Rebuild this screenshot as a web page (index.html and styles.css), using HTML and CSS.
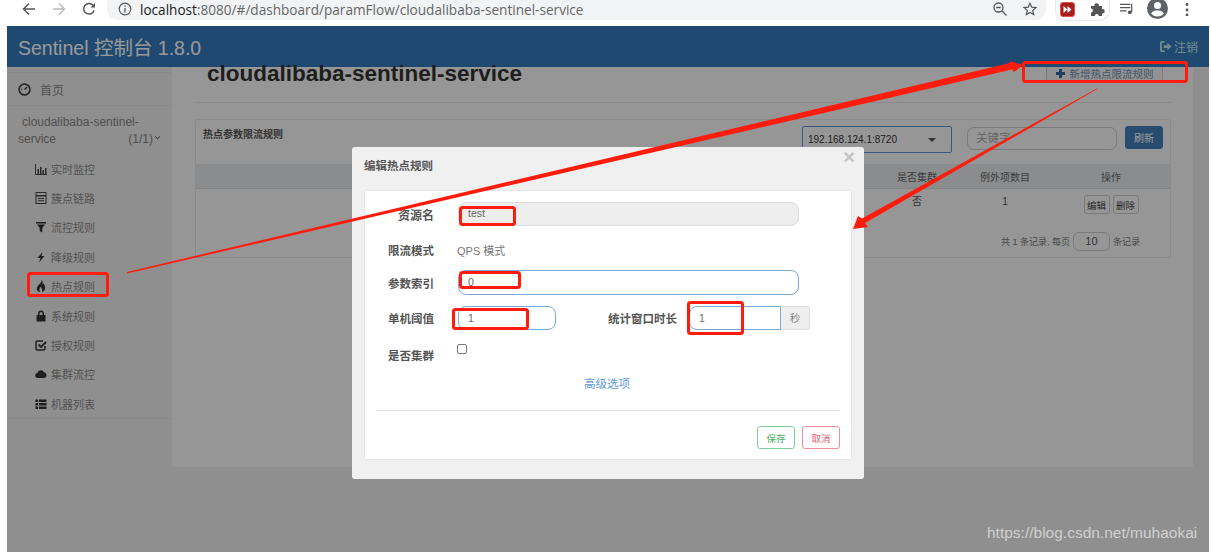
FILE: index.html
```html
<!DOCTYPE html>
<html lang="en">
<head>
    <meta charset="UTF-8">
    <title>Sentinel 控制台</title>
    <link rel="stylesheet" href="styles.css">
</head>
<body>
    <div class="browser-bar">
        <svg class="ico nav-back" viewBox="0 0 14 14"><path d="M13 7H2M7 1.500 1.500 7 7 12.500" fill="none" stroke="#555" stroke-width="1.500"/></svg>
        <svg class="ico nav-fwd" viewBox="0 0 14 14"><path d="M1 7h11M7 1.500 12.500 7 7 12.500" fill="none" stroke="#bbb" stroke-width="1.500"/></svg>
        <svg class="ico nav-reload" viewBox="0 0 14 14"><path d="M12 8.500A5.300 5.300 0 1 1 11 3.300" fill="none" stroke="#555" stroke-width="1.500"/><path d="M13 1v4.500H8.500z" fill="#555"/></svg>
        <div class="url-pill">
            <svg class="ico" viewBox="0 0 14 14"><circle cx="7" cy="7" r="5.800" fill="none" stroke="#555" stroke-width="1.200"/><path d="M7 6v4.500M7 3.500v1.300" stroke="#555" stroke-width="1.300"/></svg>
            <span class="url"><b>localhost</b>:8080/#/dashboard/paramFlow/cloudalibaba-sentinel-service</span>
            <svg class="ico url-zoom" viewBox="0 0 14 14"><circle cx="5.500" cy="5.500" r="4.500" fill="none" stroke="#555" stroke-width="1.300"/><path d="M3.300 5.500h4.400M9 9l4.500 4.500" stroke="#555" stroke-width="1.300"/></svg>
            <svg class="ico url-star" viewBox="0 0 14 14"><path d="M7 1.300 8.700 5.200l4.200.4-3.200 2.800 1 4.200L7 10.400l-3.700 2.200 1-4.200L1.100 5.600l4.200-.4z" fill="none" stroke="#555" stroke-width="1.200"/></svg>
        </div>
        <div class="ext-pill">
            <svg class="ext-red" viewBox="0 0 15 15"><rect x=".5" y=".5" width="14" height="14" rx="2.500" fill="#a81c1c" stroke="#d9534f"/><path d="M3.500 4 7.500 7.500 3.500 11zM7.500 4 11.500 7.500 7.500 11z" fill="#fff"/></svg>
            <svg class="ext-puzzle" viewBox="0 0 14 14"><path d="M0 4h3.500a2.200 2.200 0 1 1 4.300 0H11v3.200a2.200 2.200 0 1 1 0 4.300V14H7.800a2 2 0 1 0-4 0H0v-3.500a2 2 0 1 0 0-4z" fill="#555"/></svg>
        </div>
        <svg class="ico bar-list" viewBox="0 0 15 14"><path d="M0 2h11M0 5.500h11M0 9h7" stroke="#555" stroke-width="1.300"/><path d="M12.500 1.500v9" stroke="#555" stroke-width="1.300"/><circle cx="10.500" cy="10.500" r="2" fill="#555"/></svg>
        <svg class="bar-avatar" viewBox="0 0 21 21"><circle cx="10.500" cy="10.500" r="10.500" fill="#5f6368"/><circle cx="10.500" cy="7.500" r="3.500" fill="#fff"/><path d="M4 15.500c1.500-2.500 4-3 6.500-3s5 .5 6.500 3a8.500 8.500 0 0 1-13 0z" fill="#fff"/></svg>
        <svg class="bar-dots" viewBox="0 0 4 14"><circle cx="2" cy="2.500" r="1.400" fill="#555"/><circle cx="2" cy="8" r="1.400" fill="#555"/><circle cx="2" cy="13" r="1.400" fill="#555"/></svg>
    </div>

    <div class="page">
        <header class="top-nav">
            <span class="brand">Sentinel 控制台 1.8.0</span>
            <span class="logout">
                <svg viewBox="0 0 13 12"><path d="M5 1H2a1 1 0 0 0-1 1v8a1 1 0 0 0 1 1h3" fill="none" stroke="currentColor" stroke-width="2"/><path d="M4 4.500h4V2l4.500 4L8 10V7.500H4z" fill="currentColor"/></svg>
                注销
            </span>
        </header>

        <div class="layout">
            <aside class="sidebar">
                <div class="side-home">
                    <svg viewBox="0 0 12 12"><circle cx="6" cy="6" r="5" fill="none" stroke="#444" stroke-width="1.600"/><path d="M6 6 8.500 3.800M3 6h1" stroke="#444" stroke-width="1.400"/></svg>
                    首页
                </div>
                <div class="side-app">
                    <div class="app-line1">cloudalibaba-sentinel-</div>
                    <div class="app-line2"><span>service</span><span class="app-count">(1/1)<i class="chev"></i></span></div>
                </div>
                <ul class="side-menu">
                    <li><svg viewBox="0 0 12 12"><path d="M.5 1v10.500H12" fill="none" stroke="#444"/><path d="M2.500 6h1.500v5H2.500zM5 4h1.500v7H5zM7.500 7H9v4H7.500zM10 5h1.500v6H10z" fill="#444"/></svg>实时监控</li>
                    <li><svg viewBox="0 0 12 12"><rect x="1" y=".5" width="10" height="11" fill="none" stroke="#444"/><path d="M1 3h10v1.500H1zM3 6h6v1H3zM3 8.300h6v1H3z" fill="#444"/></svg>簇点链路</li>
                    <li><svg viewBox="0 0 12 12"><path d="M1 1h10v1.500H1zM2 3.500h8L7.300 7v4.500l-2.600-1.500V7z" fill="#333"/></svg>流控规则</li>
                    <li><svg viewBox="0 0 12 12"><path d="M7.500 1 2.500 7h3L4 11.500 9.500 5h-3z" fill="#333"/></svg>降级规则</li>
                    <li><svg viewBox="0 0 12 12"><path d="M6.500 0C7 3 3 4.500 2 7.500c-.8 2.300 1 4.500 3.200 4.500C3.800 10 4.500 8 6 6.500c0 2 2 2.500 1 5.500 2.500-.5 3.500-3 3-5.500-.3-1.500-1.200-2.500-1.700-3.500-.2 1-.5 1.500-1 2C8 3.500 8 1.500 6.500 0z" fill="#333"/></svg>热点规则</li>
                    <li><svg viewBox="0 0 12 12"><path d="M3 5V3.500a3 3 0 0 1 6 0V5h1.500v6.500h-9V5zM4.500 5h3V3.500a1.500 1.500 0 0 0-3 0z" fill="#333"/></svg>系统规则</li>
                    <li><svg viewBox="0 0 12 12"><path d="M10 7v2.500A1.500 1.500 0 0 1 8.500 11h-6A1.500 1.500 0 0 1 1 9.500v-6A1.500 1.500 0 0 1 2.500 2H8" fill="none" stroke="#333" stroke-width="1.500"/><path d="M3.500 5.500 6 8l5-5" fill="none" stroke="#333" stroke-width="1.800"/></svg>授权规则</li>
                    <li><svg viewBox="0 0 12 12"><path d="M3 10a2.500 2.500 0 0 1-.5-5A3.500 3.500 0 0 1 9 4.200 3 3 0 0 1 9.500 10z" fill="#333"/></svg>集群流控</li>
                    <li><svg viewBox="0 0 12 12"><path d="M.5 1.500h2.500V4H.5zM4 1.500h7.500V4H4zM.5 5h2.500v2.500H.5zM4 5h7.500v2.500H4zM.5 8.500h2.500V11H.5zM4 8.500h7.500V11H4z" fill="#333"/></svg>机器列表</li>
                </ul>
            </aside>

            <main class="content">
                <div class="page-head">
                    <h1>cloudalibaba-sentinel-service</h1>
                    <button class="btn-add"><i class="plus"></i>新增热点限流规则</button>
                </div>
                <section class="panel">
                    <div class="panel-top">
                        <span class="panel-title">热点参数限流规则</span>
                        <div class="machine-select">192.168.124.1:8720<i class="caret"></i></div>
                        <div class="search">关键字</div>
                        <button class="btn-refresh">刷新</button>
                    </div>
                    <div class="grid-row grid-head">
                        <span></span><span>是否集群</span><span>例外项数目</span><span class="col-ops">操作</span>
                    </div>
                    <div class="grid-row grid-body">
                        <span></span><span>否</span><span>1</span>
                        <span class="row-btns"><button>编辑</button><button>删除</button></span>
                    </div>
                    <div class="pager">共 1 条记录, 每页<span class="page-size">10</span>条记录</div>
                </section>
            </main>
        </div>

        <div class="backdrop"></div>

        <div class="modal">
            <div class="modal-title">编辑热点规则<span class="modal-close">×</span></div>
            <div class="modal-card">
                <div class="form-row row-res">
                    <label>资源名</label>
                    <div class="field field-off">test</div>
                </div>
                <div class="form-row row-mode">
                    <label>限流模式</label>
                    <span class="static">QPS 模式</span>
                </div>
                <div class="form-row row-idx">
                    <label>参数索引</label>
                    <div class="field">0</div>
                </div>
                <div class="form-row row-limit">
                    <label>单机阈值</label>
                    <div class="field field-short">1</div>
                    <label class="label-window">统计窗口时长</label>
                    <div class="field field-window">1</div>
                    <span class="addon">秒</span>
                </div>
                <div class="form-row row-cluster">
                    <label>是否集群</label>
                    <i class="checkbox"></i>
                </div>
                <a class="adv-link">高级选项</a>
                <div class="modal-foot">
                    <button class="btn-save">保存</button>
                    <button class="btn-cancel">取消</button>
                </div>
            </div>
        </div>
    </div>

    <svg class="marks" viewBox="0 0 1211 552">
        <g fill="#ff1c0c">
            <path d="M127 272 1008 63.500 1011 61.500 1023 65 1014 72 1012 69.500 127 273.500z"/>
            <path d="M1097 88.500 862 218.500 858 216 853 229 868 227 865 223 1097.500 89z"/>
        </g>
        <g fill="none" stroke="#ff1c0c" stroke-width="3">
            <rect x="1023.500" y="62.500" width="163" height="19" rx="2"/>
            <rect x="28.500" y="273.500" width="79" height="22" rx="2"/>
            <rect x="460.500" y="207.500" width="54" height="17" rx="2"/>
            <rect x="460.500" y="272.500" width="59" height="15" rx="2"/>
            <rect x="453.500" y="309.500" width="74" height="19" rx="2"/>
            <rect x="688.500" y="302.500" width="54" height="31" rx="2"/>
        </g>
    </svg>

    <div class="watermark">https://blog.csdn.net/muhaokai</div>
</body>
</html>
```

FILE: styles.css
```css
* {
    box-sizing: border-box;
}

html, body {
    margin: 0;
    height: 552px;
    overflow: hidden;
    background-color: #fff;
}

body {
    position: relative;
    font-family: "Liberation Sans", "Noto Sans CJK SC", sans-serif;
    color: #555;
}

button {
    font-family: inherit;
    padding: 0;
}

/* browser chrome */
.browser-bar {
    height: 26px;
    display: flex;
    align-items: flex-start;
    padding-left: 22px;
}

.ico {
    width: 14px;
    height: 14px;
    flex: none;
}

.nav-back {
    margin: 2px 16px 0 0;
}

.nav-fwd {
    margin: 2px 16px 0 0;
}

.nav-reload {
    margin: 2px 11px 0 0;
}

.url-pill {
    width: 939px;
    height: 22px;
    margin-top: -2px;
    padding: 0 9px 0 11px;
    background-color: #f1f3f4;
    border-radius: 0 0 11px 11px;
    display: flex;
    align-items: center;
}

.url {
    margin-left: 8px;
    font-family: "Open Sans", sans-serif;
    font-size: 13.600px;
    color: #666;
    white-space: nowrap;
    flex: 1;
}

.url b {
    font-weight: normal;
    color: #222;
}

.url-zoom {
    margin-right: 16px;
}

.ext-pill {
    width: 55px;
    height: 21px;
    margin-left: 9px;
    border: 1px solid #e8e8e8;
    border-top: 0;
    border-radius: 0 0 11px 11px;
    display: flex;
    align-items: flex-start;
    padding: 2px 0 0 4px;
}

.ext-red {
    width: 15px;
    height: 15px;
}

.ext-puzzle {
    width: 14px;
    height: 14px;
    margin-left: 16px;
    margin-top: 0;
}

.bar-list {
    margin: 2px 0 0 10px;
}

.bar-avatar {
    width: 21px;
    height: 21px;
    margin: -2px 0 0 13px;
}

.bar-dots {
    width: 4px;
    height: 14px;
    margin: 2px 0 0 17px;
}

/* page */
.page {
    position: absolute;
    top: 26px;
    left: 7px;
    right: 2px;
    bottom: 0;
    background-color: #eee;
    overflow: hidden;
}

.backdrop {
    position: absolute;
    top: 0;
    left: 0;
    right: 0;
    bottom: 0;
    background-color: rgba(0, 0, 0, 0.4);
}

.top-nav {
    height: 41px;
    background-color: #347bbb;
    display: flex;
    align-items: center;
    justify-content: space-between;
    padding: 0 11px;
    color: #fff;
}

.brand {
    font-size: 19.500px;
}

.logout {
    font-size: 12px;
    color: #b8ecec;
    display: flex;
    align-items: center;
    gap: 2px;
}

.logout svg {
    width: 12px;
    height: 11px;
}

.layout {
    display: flex;
}

.sidebar {
    width: 165px;
    height: 352px;
    border-bottom: 1px solid #e6e6e6;
    flex: none;
    font-size: 11px;
}

.side-home {
    height: 34px;
    margin-top: 5px;
    padding-left: 11px;
    display: flex;
    align-items: center;
    gap: 9px;
    font-size: 12px;
    color: #888;
    border-top: 1px solid #e6e6e6;
    border-bottom: 1px solid #e6e6e6;
}

.side-home svg {
    width: 13px;
    height: 13px;
}

.side-app {
    padding: 8px 0 0 11px;
    font-size: 12px;
    color: #888;
    line-height: 17px;
}

.app-line1 {
    padding-left: 4px;
}

.app-line2 {
    display: flex;
    justify-content: space-between;
    padding-right: 19px;
}

.app-count {
    position: relative;
}

.chev {
    position: absolute;
    right: -7px;
    top: 3px;
    width: 5px;
    height: 5px;
    border-right: 1px solid #555;
    border-bottom: 1px solid #555;
    transform: rotate(45deg) scale(0.8);
}

.side-menu {
    list-style: none;
    margin: 6px 0 0;
    padding: 0 0 0 28px;
}

.side-menu li {
    height: 29.400px;
    display: flex;
    align-items: center;
    gap: 4px;
    color: #8a8a8a;
}

.side-menu svg {
    width: 12px;
    height: 12px;
    flex: none;
}

.content {
    width: 1021px;
    height: 400px;
    background-color: #fbfbfb;
    padding: 0 22px 0 23px;
    flex: none;
}

.page-head {
    height: 36px;
    border-bottom: 1px solid #e6e6e6;
    display: flex;
    justify-content: space-between;
    padding: 0 9px 0 12px;
    margin-right: -1px;
}

.page-head h1 {
    margin: -6px 0 0;
    font-size: 22.500px;
    line-height: 26px;
    color: #333;
}

.btn-add {
    width: 117px;
    height: 14px;
    border: 1px solid #ccc;
    border-top: 0;
    background: #f4f4f4;
    color: #6d8fb0;
    font-size: 10.500px;
    line-height: 10px;
    display: flex;
    align-items: center;
    justify-content: center;
    gap: 5px;
}

.plus {
    width: 9px;
    height: 9px;
    background:
        linear-gradient(#356a9f, #356a9f) center / 9px 3px no-repeat,
        linear-gradient(#356a9f, #356a9f) center / 3px 9px no-repeat;
}

.panel {
    margin-top: 16px;
    height: 139px;
    border: 1px solid #e6e6e6;
    border-radius: 3px;
    position: relative;
}

.panel-top {
    height: 44px;
    padding: 6px 7px 0 7px;
    display: flex;
    align-items: flex-start;
}

.panel-title {
    font-size: 10px;
    font-weight: bold;
    margin: 1px auto 0 0;
    line-height: 15px;
}

.machine-select {
    width: 150px;
    height: 27px;
    border: 1px solid #5a98d0;
    border-radius: 2px;
    font-size: 10px;
    color: #333;
    padding: 0 5px;
    display: flex;
    align-items: center;
    justify-content: space-between;
}

.caret {
    width: 0;
    height: 0;
    border: 4px solid transparent;
    border-top-color: #555;
    border-bottom: 0;
    margin-right: 10px;
}

.search {
    width: 150px;
    height: 23px;
    margin: 1px 8px 0 15px;
    border: 1px solid #ccc;
    border-radius: 7px;
    font-size: 11.500px;
    color: #aaa;
    padding-left: 8px;
    line-height: 21px;
}

.btn-refresh {
    width: 38px;
    height: 23px;
    border: 1px solid #3e7fb9;
    border-radius: 3px;
    background-color: #447fb7;
    color: #fff;
    font-size: 10px;
}

.grid-row {
    display: grid;
    grid-template-columns: 1fr 88px 88px 121px;
    text-align: center;
    font-size: 10px;
}

.grid-head {
    height: 25px;
    background-color: #e8eaec;
    border-bottom: 1px solid #ddd;
    align-items: center;
    color: #666;
}

.col-ops {
    padding-left: 3px;
}

.grid-body {
    padding-top: 6px;
    height: 43px;
    color: #555;
    line-height: 13px;
}

.row-btns {
    display: flex;
    justify-content: center;
    gap: 3px;
    padding-left: 3px;
}

.row-btns button {
    width: 26px;
    height: 19px;
    border: 1px solid #ccc;
    border-radius: 3px;
    background: #fbfbfb;
    font-size: 9.500px;
    color: #444;
}

.pager {
    position: absolute;
    right: 30px;
    top: 112px;
    display: flex;
    align-items: center;
    gap: 3px;
    font-size: 9px;
    color: #777;
}

.page-size {
    width: 37px;
    height: 19px;
    border: 1px solid #ccc;
    border-radius: 6px;
    font-size: 11px;
    text-align: center;
    line-height: 17px;
    color: #555;
}

/* modal */
.modal {
    position: absolute;
    top: 121px;
    left: 345px;
    width: 512px;
    height: 332px;
    background-color: #f0f0f0;
    border-radius: 3px;
    padding: 0 12px;
}

.modal-title {
    height: 43px;
    padding-top: 11px;
    font-size: 11.500px;
    font-weight: bold;
    color: #555;
    line-height: 16px;
    position: relative;
}

.modal-close {
    position: absolute;
    right: -3px;
    top: -1px;
    font-size: 20px;
    line-height: 22px;
    font-weight: bold;
    color: #c4c4c4;
}

.modal-card {
    height: 270px;
    background-color: #fff;
    border: 1px solid #e6e6e6;
    border-radius: 3px;
    padding-top: 11px;
}

.form-row {
    display: flex;
    align-items: center;
    height: 24px;
    font-size: 11.500px;
}

.form-row label {
    width: 69px;
    margin-right: 24px;
    text-align: right;
    font-weight: bold;
    color: #555;
    flex: none;
}

.row-res {
    margin-bottom: 12px;
}

.row-mode {
    margin-bottom: 8px;
}

.row-idx {
    height: 25px;
    margin-bottom: 11px;
}

.row-limit {
    margin-bottom: 13px;
}

.row-res label {
    font-size: 12px;
}

.field {
    width: 341px;
    height: 100%;
    border: 1px solid #7aa9d8;
    border-radius: 8px;
    font-size: 10.500px;
    color: #666;
    padding-left: 9px;
    line-height: 23px;
}

.field-off {
    background-color: #eee;
    border-color: #ddd;
    line-height: 20px;
}

.field-short {
    width: 98px;
    padding-left: 9px;
}

.form-row .label-window {
    margin: 0 12px 0 52px;
}

.field-window {
    width: 92px;
    border-radius: 8px 0 0 8px;
}

.addon {
    width: 29px;
    height: 100%;
    background-color: #eee;
    border: 1px solid #ddd;
    border-left: 0;
    border-radius: 0 3px 3px 0;
    text-align: center;
    line-height: 22px;
    font-size: 10.500px;
    color: #888;
}

.static {
    font-size: 11px;
    color: #777;
    margin-left: -1px;
}

.checkbox {
    width: 10px;
    height: 10px;
    border: 1px solid #777;
    border-radius: 2px;
    margin: -13px 0 0 -1px;
}

.adv-link {
    display: block;
    margin: 7px 0 0;
    text-align: center;
    font-size: 11.500px;
    line-height: 20px;
    color: #5b9bd5;
    padding-right: 2px;
}

.modal-foot {
    margin: 16px 11px 0;
    padding-top: 15px;
    border-top: 1px solid #e6e6e6;
    display: flex;
    justify-content: flex-end;
    gap: 7px;
}

.modal-foot button {
    width: 38px;
    height: 23px;
    background: #fff;
    border-radius: 3px;
    font-size: 9.500px;
}

.btn-save {
    border: 1px solid #7fd095;
    color: #4cae62;
}

.btn-cancel {
    border: 1px solid #ee8f9a;
    color: #e0606f;
}

/* annotations drawn on the screenshot */
.marks {
    position: absolute;
    top: 0;
    left: 0;
    width: 1211px;
    height: 552px;
    pointer-events: none;
}

.watermark {
    position: absolute;
    left: 987px;
    top: 524px;
    font-size: 15.500px;
    color: #cfcfcf;
    white-space: nowrap;
}
```
